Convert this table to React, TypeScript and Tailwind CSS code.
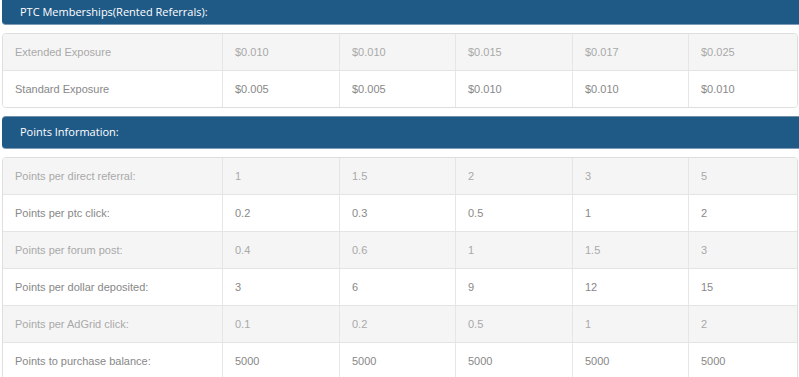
const ptcRows = [
  { label: "Extended Exposure", values: ["$0.010", "$0.010", "$0.015", "$0.017", "$0.025"] },
  { label: "Standard Exposure", values: ["$0.005", "$0.005", "$0.010", "$0.010", "$0.010"] },
];

const pointRows = [
  { label: "Points per direct referral:", values: ["1", "1.5", "2", "3", "5"] },
  { label: "Points per ptc click:", values: ["0.2", "0.3", "0.5", "1", "2"] },
  { label: "Points per forum post:", values: ["0.4", "0.6", "1", "1.5", "3"] },
  { label: "Points per dollar deposited:", values: ["3", "6", "9", "12", "15"] },
  { label: "Points per AdGrid click:", values: ["0.1", "0.2", "0.5", "1", "2"] },
  { label: "Points to purchase balance:", values: ["5000", "5000", "5000", "5000", "5000"] },
];

function SectionHeader({ title, className }: { title: string; className: string }) {
  return (
    <div
      className={`w-[810px] bg-[#1f5a87] border-b border-[#7d9bb4] flex items-center pl-[18px] text-white text-[11px] font-['Open_Sans',sans-serif] ${className}`}
    >
      {title}
    </div>
  );
}

function DataTable({ rows }: { rows: { label: string; values: string[] }[] }) {
  return (
    <div className="w-[796px] border border-[#dedede] rounded-[4px] overflow-hidden font-['Liberation_Sans',Arial,sans-serif] text-[11px]">
      {rows.map((row, i) => (
        <div
          key={row.label}
          className={`grid grid-cols-[219px_117px_116px_117px_116px_1fr] ${i > 0 ? "h-[37px] border-t border-[#e4e4e4]" : "h-[36px]"} ${
            i % 2 === 0 ? "bg-[#f5f5f5] text-[#a9a9a9]" : "bg-white text-[#888888]"
          }`}
        >
          <div className="flex items-center pl-[12px]">{row.label}</div>
          {row.values.map((v, j) => (
            <div key={j} className="flex items-center pl-[12px] border-l border-[#e6e6e6]">
              {v}
            </div>
          ))}
        </div>
      ))}
    </div>
  );
}

export default function App() {
  return (
    <div className="w-[799px] h-[377px] overflow-hidden bg-white pl-[2px]">
      <SectionHeader title="PTC Memberships(Rented Referrals):" className="h-[25px] rounded-b-[4px]" />
      <div className="mt-[8px]">
        <DataTable rows={ptcRows} />
      </div>
      <SectionHeader title="Points Information:" className="mt-[8px] h-[33px] rounded-[4px] border-t border-t-[#6f90ab]" />
      <div className="mt-[8px]">
        <DataTable rows={pointRows} />
      </div>
    </div>
  );
}
